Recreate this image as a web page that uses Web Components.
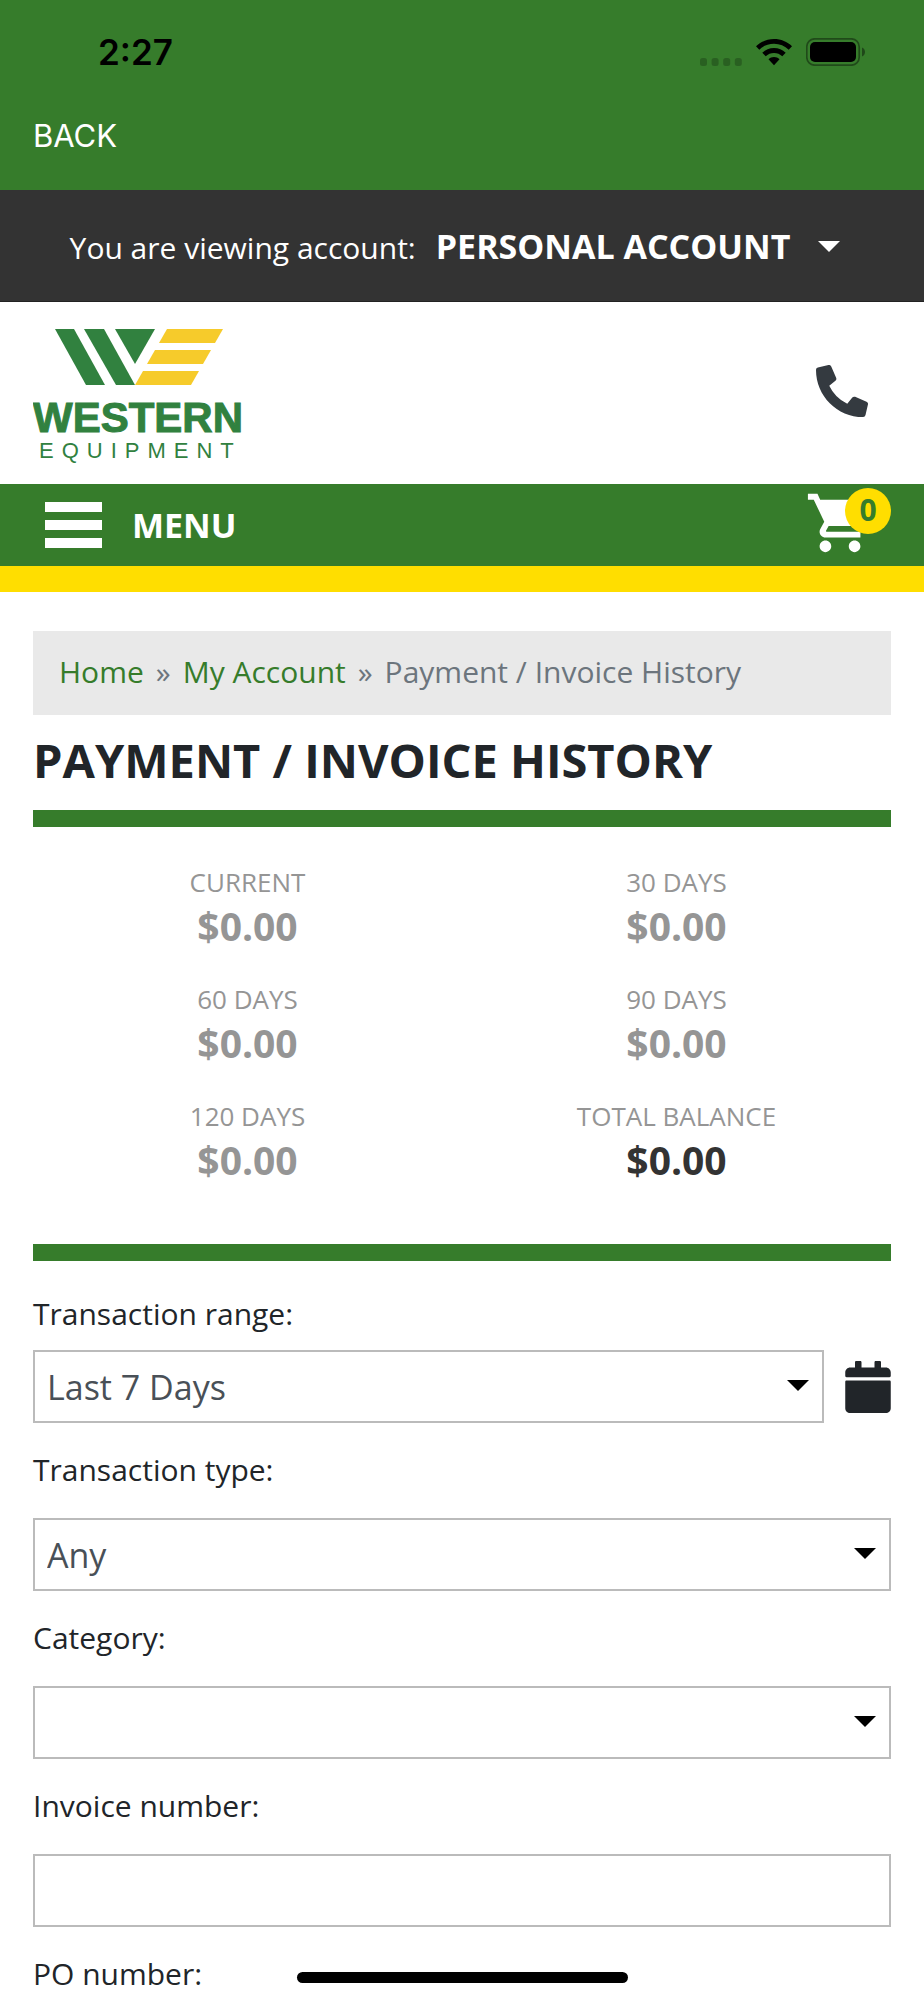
<!DOCTYPE html>
<html lang="en">
<head>
<meta charset="utf-8">
<meta name="viewport" content="width=device-width, initial-scale=1">
<title>Payment / Invoice History</title>
<style>
  :root { --green: #367c2b; --yellow: #ffde00; --ink: #212529; --gutter: 33px; }
  body { margin: 0; background: #fff; color: var(--ink); font-family: "Open Sans", sans-serif; }
</style>
</head>
<body>
<account-app>
  <status-bar slot="top" time="2:27"></status-bar>
  <back-bar slot="top">BACK</back-bar>
  <account-switcher label="You are viewing account:">PERSONAL ACCOUNT</account-switcher>
  <site-header></site-header>
  <menu-bar count="0">MENU</menu-bar>
  <page-body>
    <bread-crumb>
      <crumb-item href="#home">Home</crumb-item>
      <crumb-item href="#account">My Account</crumb-item>
      <crumb-item>Payment / Invoice History</crumb-item>
    </bread-crumb>
    <page-title>PAYMENT / INVOICE HISTORY</page-title>
    <balance-grid>
      <balance-tile label="CURRENT">$0.00</balance-tile>
      <balance-tile label="30 DAYS">$0.00</balance-tile>
      <balance-tile label="60 DAYS">$0.00</balance-tile>
      <balance-tile label="90 DAYS">$0.00</balance-tile>
      <balance-tile label="120 DAYS">$0.00</balance-tile>
      <balance-tile label="TOTAL BALANCE" total>$0.00</balance-tile>
    </balance-grid>
    <filter-form>
      <form-field label="Transaction range:" type="select" value="Last 7 Days" tight>
        <calendar-button slot="after"></calendar-button>
      </form-field>
      <form-field label="Transaction type:" type="select" value="Any"></form-field>
      <form-field label="Category:" type="select" value=""></form-field>
      <form-field label="Invoice number:" type="text"></form-field>
      <form-field label="PO number:" type="text"></form-field>
    </filter-form>
  </page-body>
  <home-indicator slot="overlay"></home-indicator>
</account-app>

<script>
const define = (name, render) => customElements.define(name, class extends HTMLElement {
  constructor() {
    super();
    this.attachShadow({ mode: "open" });
  }
  connectedCallback() {
    this.shadowRoot.innerHTML = "<style>*{box-sizing:border-box}</style>" + render(this);
  }
});

define("account-app", () => `
  <style>
    :host { display: flex; flex-direction: column; height: 100vh; position: relative; overflow: hidden; }
    main { flex: 1; min-height: 0; overflow-y: auto; scrollbar-width: none; }
  </style>
  <slot name="top"></slot>
  <main><slot></slot></main>
  <slot name="overlay"></slot>`);

define("status-bar", el => `
  <style>
    :host { display: flex; flex: none; justify-content: space-between; align-items: center; height: 104px;
      padding: 0 59px 0 98px; box-sizing: border-box; background: var(--green); color: #000; }
    time { font: 600 35px/44px Inter, sans-serif; }
    div { display: flex; align-items: center; gap: 14px; }
    svg { display: block; }
  </style>
  <time>${el.getAttribute("time")}</time>
  <div>
    <svg width="42" height="28" viewBox="0 0 42 28" fill="#000" opacity=".22">
      <rect y="20" width="7" height="8" rx="2.5"/><rect x="11.6" y="20" width="7" height="8" rx="2.5"/>
      <rect x="23.2" y="20" width="7" height="8" rx="2.5"/><rect x="34.8" y="20" width="7" height="8" rx="2.5"/>
    </svg>
    <svg width="36" height="28" viewBox="0 0 36 28">
      <path fill="#000" d="M18 1C11 1 4.700 3.700 0 8.200L3.300 11.700C7.100 8 12.300 5.800 18 5.800S28.900 8 32.700 11.700L36 8.200C31.300 3.700 25 1 18 1Z"/>
      <path fill="#000" d="M18 10C13.500 10 9.400 11.800 6.300 14.700L9.700 18.300C11.900 16.200 14.800 15 18 15S24.100 16.200 26.300 18.300L29.700 14.700C26.600 11.800 22.500 10 18 10Z"/>
      <path fill="#000" d="M18 19.100C15.900 19.100 14 19.900 12.500 21.200L18 27.200L23.500 21.200C22 19.900 20.100 19.100 18 19.100Z"/>
    </svg>
    <svg width="59" height="28" viewBox="0 0 59 28">
      <rect x=".8" y=".8" width="52.400" height="26.400" rx="8" fill="none" stroke="#000" stroke-opacity=".4" stroke-width="1.700"/>
      <rect x="4" y="4" width="46" height="20" rx="5" fill="#000"/>
      <path d="M56 9.500c4 1.600 4 7.400 0 9z" fill="#000" fill-opacity=".42"/>
    </svg>
  </div>`);

define("back-bar", () => `
  <style>
    :host { display: block; flex: none; background: var(--green); padding: 0 var(--gutter) 22px; }
    button { display: block; height: 64px; padding: 0; border: 0; background: none; color: #fff;
      font: 400 31px/64px Inter, sans-serif; }
  </style>
  <button type="button"><slot></slot></button>`);

define("account-switcher", el => `
  <style>
    :host { display: flex; justify-content: center; align-items: center; height: 112px; padding: 3px 14px 0 0;
      box-sizing: border-box; background: #333; border-bottom: 1px solid #222; color: #fff; }
    div { display: flex; align-items: baseline; gap: 20px; }
    span { font-size: 30px; line-height: 48px; }
    button { display: flex; align-items: center; gap: 28px; padding: 0; border: 0; background: none; color: #fff;
      font: 700 34px/48px "Open Sans", sans-serif; }
  </style>
  <div>
    <span id="caption">${el.getAttribute("label")}</span>
    <button type="button" aria-describedby="caption"><slot></slot>
      <svg width="22" height="11" viewBox="0 0 22 11"><path fill="#fff" d="M0 0H22L11 11Z"/></svg>
    </button>
  </div>`);

define("site-header", () => `
  <style>
    :host { display: flex; justify-content: space-between; align-items: flex-start; height: 182px;
      padding: 26px 56px 0 var(--gutter); box-sizing: border-box; background: #fff; }
    a, svg { display: block; }
    .call { padding-top: 37px; }
    text { font-family: "Liberation Sans", sans-serif; fill: #31813f; }
    .name { font-size: 42px; font-weight: 700; stroke: #31813f; stroke-width: 1px; }
    .sub { font-size: 22px; letter-spacing: 8px; }
  </style>
  <a href="#home" aria-label="Western Equipment home">
    <svg width="220" height="144" viewBox="0 0 220 144">
      <g fill="#31813f">
        <path d="M22 1H41L72 57H53Z"/><path d="M51 1H71L102 57H83Z"/><path d="M82 1H122L102 36Z"/>
      </g>
      <g fill="#f6cb2b">
        <path d="M134 1H190L182 15H126Z"/><path d="M122 22H178L170 36H114Z"/><path d="M110 43H166L158 57H102Z"/>
      </g>
      <text class="name" x="0" y="104">WESTERN</text>
      <text class="sub" x="6" y="130">EQUIPMENT</text>
    </svg>
  </a>
  <a class="call" href="#call" aria-label="Call us">
    <svg width="52" height="52" viewBox="0 0 512 512"><path fill="#343a40" d="M497.390 361.800l-112-48a24 24 0 0 0-28 6.900l-49.600 60.600A370.660 370.660 0 0 1 130.600 204.110l60.600-49.600a23.940 23.940 0 0 0 6.900-28l-48-112A24.160 24.160 0 0 0 122.600.610l-104 24A24 24 0 0 0 0 48c0 256.500 207.900 464 464 464a24 24 0 0 0 23.400-18.600l24-104a24.290 24.290 0 0 0-14.010-27.600z"/></svg>
  </a>`);

define("menu-bar", el => `
  <style>
    :host { display: flex; justify-content: space-between; align-items: center; height: 108px;
      padding: 0 var(--gutter) 0 45px; box-sizing: border-box; background: var(--green); border-bottom: 26px solid var(--yellow); }
    button { display: flex; align-items: center; gap: 30px; padding: 0; border: 0; background: none; color: #fff;
      font: 700 34px/48px "Open Sans", sans-serif; }
    svg { display: block; }
    a { display: block; position: relative; padding: 0 16px 4px 0; text-decoration: none; }
    b { position: absolute; top: 0; right: 0; width: 46px; height: 46px; border-radius: 50%; background: var(--yellow);
      color: var(--green); font-size: 30px; line-height: 44px; text-align: center; }
  </style>
  <button type="button">
    <svg width="57" height="46" viewBox="0 0 57 46" fill="#fff"><path d="M0 0H57V10H0ZM0 18H57V28H0ZM0 36H57V46H0Z"/></svg>
    <slot></slot>
  </button>
  <a href="#cart" aria-label="Shopping cart">
    <svg width="70" height="70" viewBox="0 0 24 24" fill="#fff"><path d="M7 18c-1.100 0-1.990.9-1.990 2S5.900 22 7 22s2-.9 2-2-.9-2-2-2zM1 2v2h2l3.600 7.590-1.350 2.450c-.16.280-.25.610-.25.960 0 1.100.9 2 2 2h12v-2H7.420c-.14 0-.25-.11-.25-.25l.03-.12.9-1.630h7.450c.75 0 1.410-.41 1.750-1.030l3.580-6.490A1.003 1.003 0 0 0 20 4H5.210l-.94-2H1zm16 16c-1.100 0-1.990.9-1.990 2s.89 2 1.990 2 2-.9 2-2-.9-2-2-2z"/></svg>
    <b>${el.getAttribute("count")}</b>
  </a>`);

define("page-body", () => `
  <style>:host { display: block; padding: 39px var(--gutter) 60px; }</style>
  <slot></slot>`);

define("bread-crumb", () => `
  <style>
    :host { display: block; background: #e9e9e9; }
    nav { display: flex; flex-wrap: wrap; gap: 12px; padding: 18px 26px 21px; }
  </style>
  <nav aria-label="Breadcrumb"><slot></slot></nav>`);

define("crumb-item", el => `
  <style>
    :host { display: flex; gap: 12px; font-size: 30px; line-height: 45px; color: #6c757d; }
    :host(:not(:first-child))::before { content: "»"; }
    a { color: var(--green); text-decoration: none; }
  </style>
  ${el.hasAttribute("href") ? `<a href="${el.getAttribute("href")}"><slot></slot></a>` : `<span><slot></slot></span>`}`);

define("page-title", () => `
  <style>
    :host { display: block; padding: 16px 0 21px; }
    h1 { margin: 0; font-size: 47px; line-height: 58px; font-weight: 700; }
  </style>
  <h1><slot></slot></h1>`);

define("balance-grid", () => `
  <style>
    :host { display: grid; grid-template-columns: 1fr 1fr; row-gap: 30px; padding: 36px 0 60px;
      border: solid var(--green); border-width: 17px 0; }
  </style>
  <slot></slot>`);

define("balance-tile", el => `
  <style>
    :host { display: flex; flex-direction: column; align-items: center; color: #959595; }
    span { font-size: 26px; line-height: 39px; }
    strong { font-size: 39px; line-height: 48px; }
    :host([total]) strong { color: #333; }
  </style>
  <span>${el.getAttribute("label")}</span><strong><slot></slot></strong>`);

define("filter-form", () => `
  <style>form { display: flex; flex-direction: column; gap: 24px; padding-top: 30px; }</style>
  <form><slot></slot></form>`);

define("form-field", el => {
  const value = el.getAttribute("value") || "";
  const control = el.getAttribute("type") === "select"
    ? `<div class="box"><select id="control"><option>${value}</option></select>
        <svg width="22" height="11" viewBox="0 0 22 11"><path d="M0 0H22L11 11Z"/></svg></div>`
    : `<div class="box"><input id="control" type="text"></div>`;
  return `
  <style>
    :host { display: flex; flex-direction: column; gap: 26px; }
    :host([tight]) { gap: 14px; }
    label { font-size: 30px; line-height: 45px; }
    .row { display: flex; align-items: center; gap: 21px; }
    .box { flex: 1; position: relative; }
    select, input { appearance: none; display: block; width: 100%; height: 73px; margin: 0; padding: 0 12px;
      border: 2px solid #bbb; border-radius: 0; background: #fff; color: #495057; font: 400 34px/48px "Open Sans", sans-serif; }
    svg { position: absolute; right: 15px; top: 30px; pointer-events: none; }
  </style>
  <label for="control">${el.getAttribute("label")}</label>
  <div class="row">${control}<slot name="after"></slot></div>`;
});

define("calendar-button", () => `
  <style>
    :host { display: block; }
    button { display: block; padding: 0; border: 0; background: none; color: var(--ink); }
    svg { display: block; }
  </style>
  <button type="button" aria-label="Choose dates">
    <svg width="46" height="52" viewBox="0 0 448 512" fill="currentColor"><path d="M12 192h424c6.600 0 12 5.400 12 12v260c0 26.500-21.500 48-48 48H48c-26.500 0-48-21.500-48-48V204c0-6.600 5.400-12 12-12zm436-44v-36c0-26.500-21.500-48-48-48h-48V12c0-6.600-5.400-12-12-12h-40c-6.600 0-12 5.400-12 12v52H160V12c0-6.600-5.400-12-12-12h-40c-6.600 0-12 5.400-12 12v52H48C21.500 64 0 85.500 0 112v36c0 6.600 5.400 12 12 12h424c6.600 0 12-5.400 12-12z"/></svg>
  </button>`);

define("home-indicator", () => `
  <style>
    :host { position: absolute; inset: auto 0 17px; display: flex; justify-content: center; pointer-events: none; }
    div { width: 331px; height: 11px; border-radius: 6px; background: #000; }
  </style>
  <div></div>`);
</script>
</body>
</html>
